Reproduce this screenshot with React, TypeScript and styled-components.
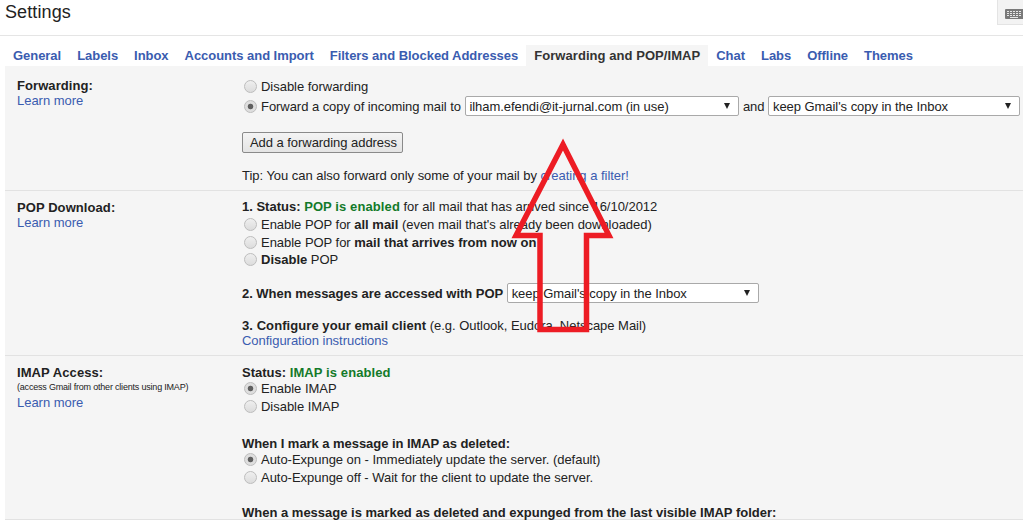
import styled, { createGlobalStyle } from "styled-components";

const Global = createGlobalStyle`
  html, body {
    margin: 0;
    padding: 0;
    background: #fff;
    overflow: hidden;
  }
  body {
    font-family: "Liberation Sans", Arial, sans-serif;
    font-size: 13px;
    letter-spacing: -0.03px;
    color: #222;
  }
`;

const Page = styled.div`
  position: relative;
  width: 1023px;
  height: 520px;
  overflow: hidden;
`;

const Header = styled.header`
  height: 35px;
  border-bottom: 1px solid #e5e5e5;
  display: flex;
  justify-content: space-between;
  align-items: flex-start;
`;

const Title = styled.h1`
  margin: 0;
  padding: 0 0 0 5px;
  font-size: 18px;
  font-weight: 400;
  letter-spacing: 0.1px;
  line-height: 24px;
  color: #222;
`;

const KeyboardButton = styled.div`
  width: 26px;
  height: 25px;
  box-sizing: border-box;
  background: #f3f3f3;
  border: 1px solid #e4e4e4;
  border-right: 0;
  border-top: 0;
  padding: 7px 0 0 7px;
`;

const Tabs = styled.nav`
  display: flex;
  padding: 9px 0 0 5px;
  height: 21px;
`;

const Tab = styled.a<{ $active?: boolean }>`
  display: block;
  padding: 2px 8px 0;
  height: 19px;
  line-height: 17px;
  font-weight: 700;
  letter-spacing: ${(p) => (p.$active ? "0.06px" : "-0.04px")};
  color: ${(p) => (p.$active ? "#333" : "#3a5cb0")};
  background: ${(p) => (p.$active ? "#f5f5f5" : "transparent")};
  white-space: nowrap;
`;

const Panel = styled.main`
  margin-left: 5px;
  background: #f5f5f5;
  height: 454px;
`;

const Section = styled.section<{ $height: number }>`
  display: grid;
  grid-template-columns: 237px 1fr;
  height: ${(p) => p.$height}px;
  box-sizing: border-box;
  border-bottom: 1px solid #e2e2e2;
`;

const Label = styled.div<{ $top: number }>`
  padding: ${(p) => p.$top}px 0 0 12px;
  line-height: 15px;
`;

const LabelTitle = styled.div`
  font-weight: 700;
  letter-spacing: 0.08px;
  color: #222;
`;

const Note = styled.div`
  font-size: 9px;
  line-height: 15px;
  letter-spacing: -0.2px;
`;

const Learn = styled.a`
  display: block;
  color: #3a5cb0;
`;

const Content = styled.div<{ $top: number }>`
  padding-top: ${(p) => p.$top}px;
`;

const Line = styled.div<{ $h?: number; $gap?: number; $spacing?: number }>`
  display: flex;
  align-items: center;
  height: ${(p) => p.$h ?? 18}px;
  margin-top: ${(p) => p.$gap ?? 0}px;
  letter-spacing: ${(p) => p.$spacing ?? -0.03}px;
  white-space: pre;
`;

const Radio = styled.input.attrs({ type: "radio", readOnly: true })`
  appearance: none;
  flex: none;
  width: 13px;
  height: 13px;
  margin: 0 4px 0 2px;
  border-radius: 50%;
  border: 1px solid #bdbdbd;
  box-sizing: border-box;
  background: linear-gradient(#efefef, #dcdcdc);
  &:checked {
    background: radial-gradient(circle, #5f5f5f 0 2.4px, #dedede 3.2px);
  }
`;

const Strong = styled.b<{ $spacing?: number }>`
  font-weight: 700;
  letter-spacing: ${(p) => p.$spacing ?? 0}px;
  color: #222;
`;

const Green = styled.b`
  font-weight: 700;
  letter-spacing: 0.1px;
  color: #137a2a;
`;

const Link = styled.a`
  color: #3a5cb0;
`;

const Select = styled.div<{ $width: number }>`
  position: relative;
  display: inline-flex;
  align-items: center;
  flex: none;
  width: ${(p) => p.$width}px;
  height: 20px;
  box-sizing: border-box;
  padding-left: 3.5px;
  margin: 0 4px;
  letter-spacing: -0.05px;
  background: #fff;
  border: 1px solid #a9a9a9;
  border-radius: 2px;
  &::after {
    content: "";
    position: absolute;
    right: 8px;
    top: 6px;
    border-left: 3.5px solid transparent;
    border-right: 3.5px solid transparent;
    border-top: 6px solid #222;
  }
`;

const Button = styled.div`
  display: inline-flex;
  align-items: center;
  height: 21px;
  box-sizing: border-box;
  padding: 0 5px 0 7px;
  letter-spacing: -0.05px;
  border: 1px solid #8a8a8a;
  border-radius: 2px;
  background: linear-gradient(#f4f4f4, #e4e4e4);
`;

const ArrowOverlay = styled.svg`
  position: absolute;
  left: 0;
  top: 0;
  pointer-events: none;
`;

export default function App() {
  return (
    <Page>
      <Global />
      <Header>
        <Title>Settings</Title>
        <KeyboardButton>
          <svg width="19" height="10" viewBox="0 0 19 10">
            <rect width="19" height="10" rx="1" fill="#7a7a7a" />
            <path
              d="M2 2.5h2M5 2.5h2M8 2.5h2M11 2.5h2M14 2.5h2M2 4.5h2M5 4.5h2M8 4.5h2M11 4.5h2M14 4.5h2M2 6.5h2M5 6.5h2M8 6.5h2M11 6.5h2M14 6.5h2M5 8.5h8"
              stroke="#e8e8e8"
              strokeWidth="1"
            />
          </svg>
        </KeyboardButton>
      </Header>
      <Tabs>
        <Tab>General</Tab>
        <Tab>Labels</Tab>
        <Tab>Inbox</Tab>
        <Tab>Accounts and Import</Tab>
        <Tab>Filters and Blocked Addresses</Tab>
        <Tab $active>Forwarding and POP/IMAP</Tab>
        <Tab>Chat</Tab>
        <Tab>Labs</Tab>
        <Tab>Offline</Tab>
        <Tab>Themes</Tab>
      </Tabs>
      <Panel>
        <Section $height={125}>
          <Label $top={12}>
            <LabelTitle>Forwarding:</LabelTitle>
            <Learn>Learn more</Learn>
          </Label>
          <Content $top={11}>
            <Line>
              <Radio />
              Disable forwarding
            </Line>
            <Line $h={20} $gap={1} $spacing={-0.05}>
              <Radio defaultChecked />
              Forward a copy of incoming mail to
              <Select $width={274}>ilham.efendi@it-jurnal.com (in use)</Select>
              and
              <Select $width={252}>keep Gmail's copy in the Inbox</Select>
            </Line>
            <Line $h={21} $gap={16}>
              <Button>Add a forwarding address</Button>
            </Line>
            <Line $gap={13}>
              Tip: You can also forward only some of your mail by <Link>creating a filter!</Link>
            </Line>
          </Content>
        </Section>
        <Section $height={165}>
          <Label $top={9}>
            <LabelTitle>POP Download:</LabelTitle>
            <Learn>Learn more</Learn>
          </Label>
          <Content $top={7}>
            <Line $h={17}>
              <Strong>1. Status: </Strong>
              <Green>POP is enabled</Green> for all mail that has arrived since 16/10/2012
            </Line>
            <Line>
              <Radio />
              Enable POP for <Strong>all mail</Strong> (even mail that's already been downloaded)
            </Line>
            <Line>
              <Radio />
              Enable POP for <Strong $spacing={0.03}>mail that arrives from now on</Strong>
            </Line>
            <Line $h={17}>
              <Radio />
              <Strong>Disable</Strong> POP
            </Line>
            <Line $h={20} $gap={15}>
              <Strong $spacing={-0.03}>2. When messages are accessed with POP</Strong>
              <Select $width={252}>keep Gmail's copy in the Inbox</Select>
            </Line>
            <Line $h={15} $gap={15}>
              <Strong $spacing={0.07}>3. Configure your email client</Strong> (e.g. Outlook, Eudora, Netscape Mail)
            </Line>
            <Line $h={15}>
              <Link>Configuration instructions</Link>
            </Line>
          </Content>
        </Section>
        <Section $height={164}>
          <Label $top={9}>
            <LabelTitle>IMAP Access:</LabelTitle>
            <Note>(access Gmail from other clients using IMAP)</Note>
            <Learn>Learn more</Learn>
          </Label>
          <Content $top={9}>
            <Line $h={14}>
              <Strong>Status: </Strong>
              <Green>IMAP is enabled</Green>
            </Line>
            <Line>
              <Radio defaultChecked />
              Enable IMAP
            </Line>
            <Line>
              <Radio />
              Disable IMAP
            </Line>
            <Line $h={13} $gap={22}>
              <Strong $spacing={-0.05}>When I mark a message in IMAP as deleted:</Strong>
            </Line>
            <Line>
              <Radio defaultChecked />
              Auto-Expunge on - Immediately update the server. (default)
            </Line>
            <Line>
              <Radio />
              Auto-Expunge off - Wait for the client to update the server.
            </Line>
            <Line $h={15} $gap={19}>
              <Strong>When a message is marked as deleted and expunged from the last visible IMAP folder:</Strong>
            </Line>
          </Content>
        </Section>
      </Panel>
      <ArrowOverlay width="1023" height="520" viewBox="0 0 1023 520">
        <path
          d="M563 144.5 L516 235.5 H540 V329.5 H586.5 V235.5 H609 Z"
          fill="none"
          stroke="#ed1c24"
          strokeWidth="5.5"
        />
      </ArrowOverlay>
    </Page>
  );
}
